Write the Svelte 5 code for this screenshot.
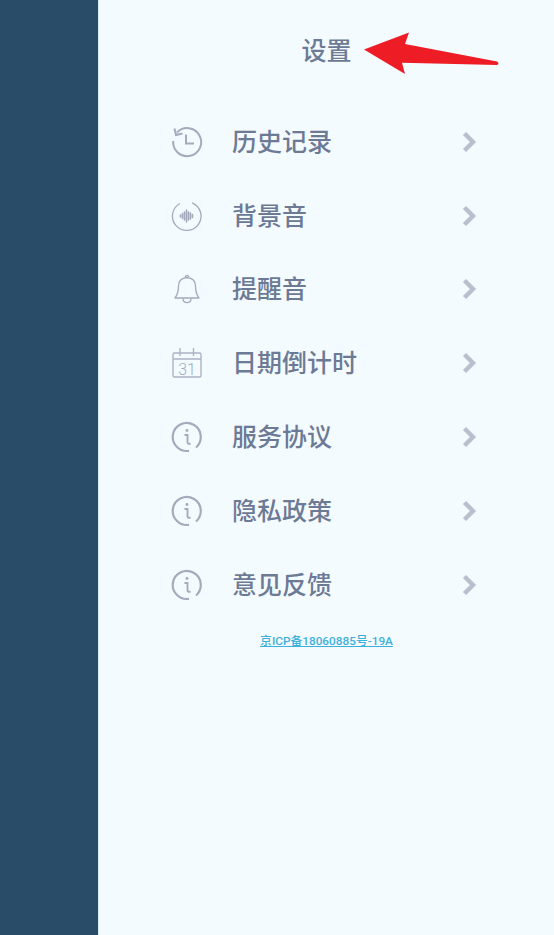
<script lang="ts">
  // Settings drawer: dark strip on the left, menu list on the right
  const items = [
    { icon: "history", label: "历史记录" },
    { icon: "sound", label: "背景音" },
    { icon: "bell", label: "提醒音" },
    { icon: "calendar", label: "日期倒计时" },
    { icon: "info", label: "服务协议" },
    { icon: "info", label: "隐私政策" },
    { icon: "info", label: "意见反馈" },
  ];
</script>

<div class="screen">
  <div class="strip"></div>
  <div class="panel">
    <div class="title">设置</div>
    <svg class="arrow" width="140" height="50" viewBox="0 0 140 50">
      <path d="M1 18.5 L46 1.5 L42 13 L134 30.5 Q137 32.5 134 34 L39 31.7 L42 43 Z" fill="#ee1c25" />
    </svg>

    <ul class="menu">
      {#each items as item}
        <li class="row">
          <span class="icon">
            {#if item.icon === "history"}
              <svg width="32" height="32" viewBox="0 0 32 32" fill="none" stroke="#a3abbc" stroke-width="2">
                <path d="M6 6.5 A14 14 0 1 1 2.2 15" />
                <path d="M3.5 2.5 L5 9 L11.5 7.5" />
                <path d="M15 8.5 V17.5 H23" />
              </svg>
            {:else if item.icon === "sound"}
              <svg width="32" height="32" viewBox="0 0 32 32" fill="none" stroke="#a3abbc">
                <path d="M9 3.5 A14.3 14.3 0 1 0 21 2.8" stroke-width="1.3" />
                <path d="M9.5 15 V17 M11.5 13.5 V18.5 M13.5 12 V20 M15.5 10 V22 M17.5 12 V20 M19.5 13 V19 M21.5 14.5 V17.5" stroke-width="1.6" stroke-linecap="round" />
              </svg>
            {:else if item.icon === "bell"}
              <svg width="32" height="32" viewBox="0 0 32 32" fill="none" stroke="#a3abbc" stroke-width="1.3">
                <path d="M4 25 C7 21 7.5 18 7.5 13 C7.5 8 11 5 16 4.5 C21 5 24.5 8 24.5 13 C24.5 18 25 21 28 25 Z" stroke-linejoin="round" />
                <path d="M14 4 Q16 1 18 4" />
                <path d="M12 25.5 C12 31 20 31 20 25.5" />
              </svg>
            {:else if item.icon === "calendar"}
              <svg width="32" height="32" viewBox="0 0 32 32" fill="none" stroke="#acb4c3" stroke-width="1.4">
                <rect x="2" y="6" width="28" height="24" rx="1.5" />
                <path d="M2 12 H30 M9 1 V9 M22.5 1 V9" />
                <text x="16" y="27.5" text-anchor="middle" class="cal-day">31</text>
              </svg>
            {:else}
              <svg width="32" height="32" viewBox="0 0 32 32" fill="none" stroke="#a3abbc" stroke-width="2.2">
                <path d="M25 26.5 A14 14 0 1 0 18 29.8" />
                <path d="M13.5 14 H16.5 V21 Q16.5 23.5 19.5 22.5" stroke-width="1.9" />
                <circle cx="16" cy="9.5" r="1.4" fill="#a3abbc" stroke="none" />
              </svg>
            {/if}
          </span>
          <span class="label">{item.label}</span>
          <svg class="chevron" width="15" height="22" viewBox="0 0 15 22" fill="none">
            <path d="M2.5 2.5 L11 11 L2.5 19.5" stroke="#b8bfcd" stroke-width="4.4" />
          </svg>
        </li>
      {/each}
    </ul>

    <a class="icp" href="#icp">京ICP备18060885号-19A</a>
  </div>
</div>

<style>
  :global(body) {
    margin: 0;
    font-family: "Roboto", "Noto Sans CJK SC", sans-serif;
  }
  .screen {
    display: flex;
    width: 554px;
    height: 935px;
    overflow: hidden;
  }
  .strip {
    width: 98px;
    flex-shrink: 0;
    background: #294d68;
  }
  .panel {
    position: relative;
    flex: 1;
    display: flex;
    flex-direction: column;
    align-items: center;
    background: #f4fbff;
    border-left: 1px solid #dcebf3;
  }
  .title {
    margin-top: 34px;
    line-height: 36px;
    font-size: 25px;
    font-weight: 500;
    color: #6c7a95;
  }
  .arrow {
    position: absolute;
    left: 264px;
    top: 31px;
  }
  .menu {
    list-style: none;
    margin: 35px 0 0;
    padding: 0 0 0 72px;
    width: 100%;
    box-sizing: border-box;
  }
  .row {
    display: flex;
    align-items: center;
    height: 73.8px;
  }
  .icon {
    display: flex;
    width: 32px;
    height: 32px;
    margin-right: 29px;
  }
  .cal-day {
    font-family: "Roboto", sans-serif;
    font-size: 16px;
    font-weight: 300;
    fill: #a3abbc;
    stroke: none;
  }
  .label {
    flex: 1;
    padding-bottom: 4px;
    font-size: 25px;
    font-weight: 500;
    color: #6c7a95;
  }
  .chevron {
    margin-right: 77px;
  }
  .icp {
    margin-top: 9px;
    font-size: 11.8px;
    font-weight: 500;
    color: #3eb0dc;
    text-decoration: underline;
  }
</style>
